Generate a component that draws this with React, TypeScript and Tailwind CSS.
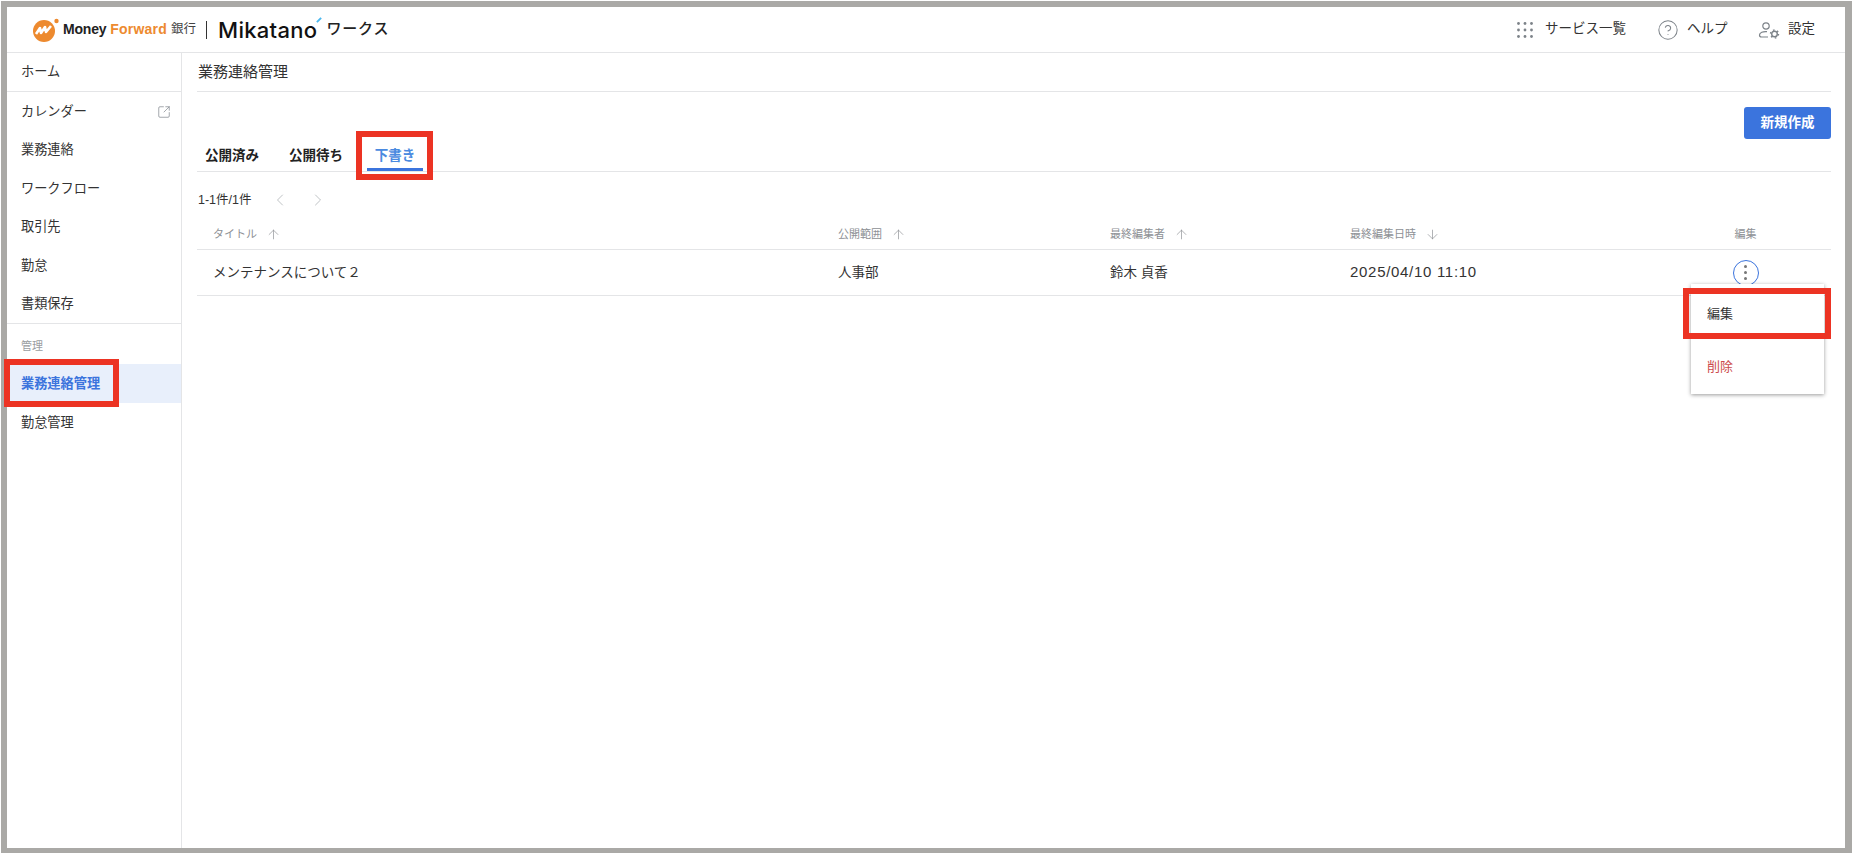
import { ChevronLeft, ChevronRight, ArrowUp, ArrowDown, SquareArrowOutUpRight, CircleHelp } from "lucide-react";

const navTop = ["カレンダー", "業務連絡", "ワークフロー", "取引先", "勤怠", "書類保存"];

const columns = [
  { label: "タイトル", value: "メンテナンスについて２", up: true, latin: false },
  { label: "公開範囲", value: "人事部", up: true, latin: false },
  { label: "最終編集者", value: "鈴木 貞香", up: true, latin: false },
  { label: "最終編集日時", value: "2025/04/10 11:10", up: false, latin: true },
];

function Logo() {
  return (
    <div className="flex items-center">
      <svg width="27" height="24" viewBox="0 0 27 24" className="ml-[25px]">
        <circle cx="12" cy="13" r="11" fill="#ed8a2f" />
        <path d="M4 16 L8 10 L9 15 L13 9 L14 14 L19 8" fill="none" stroke="#fff" strokeWidth="2.6" strokeLinejoin="round" />
        <circle cx="24.5" cy="3" r="2.2" fill="#ed8a2f" />
      </svg>
      <span className="ml-[4px] text-[14px] font-bold tracking-[-0.2px] text-[#222]">Money</span>
      <span className="ml-[4px] text-[14px] font-bold tracking-[0.2px] text-[#ed8a2f]">Forward</span>
      <span className="ml-[4px] text-[12.5px] text-[#444]">銀行</span>
      <span className="ml-[10px] h-[18px] w-px bg-[#333]" />
      <span className="relative ml-[11px] font-['Inter',sans-serif] text-[22px] font-medium leading-none tracking-[0.3px] text-[#111]">
        Mikatano
        <span className="absolute right-[-5px] top-[0px] h-[2px] w-[6px] -rotate-45 bg-[#4db8ee]" />
      </span>
      <span className="ml-[9px] text-[15px] font-medium tracking-[0.8px] text-[#222]">ワークス</span>
    </div>
  );
}

function HeaderRight() {
  return (
    <div className="flex items-center whitespace-nowrap text-[13.5px] text-[#333]">
      <svg width="16" height="16" viewBox="0 0 16 16" fill="#7d8389">
        {[1.5, 8, 14.5].map((y) =>
          [1.5, 8, 14.5].map((x) => <circle key={`${x}-${y}`} cx={x} cy={y} r="1.4" />),
        )}
      </svg>
      <span className="ml-[12px] w-[81px]">サービス一覧</span>
      <CircleHelp size={22} strokeWidth={1.1} className="ml-[31px] text-[#7d8389]" />
      <span className="ml-[8px] w-[41px]">ヘルプ</span>
      <svg width="22" height="18" viewBox="0 0 22 18" fill="none" stroke="#7d8389" strokeWidth="1.2" className="ml-[30px]">
        <circle cx="8" cy="5" r="3.2" />
        <path d="M9 10.6 C5 10.2 1.5 11.6 1.5 14 C1.5 15.2 2.2 16 3.5 16 H10" />
        <circle cx="16.5" cy="13" r="2.8" strokeWidth="1.4" />
        <circle cx="16.5" cy="13" r="4" strokeWidth="1.4" strokeDasharray="1.6 2.6" />
      </svg>
      <span className="ml-[8px] mr-[30px]">設定</span>
    </div>
  );
}

function Sidebar() {
  return (
    <aside className="w-[175px] shrink-0 border-r border-[#e4e5e7] text-[13.2px] text-[#333]">
      <div className="flex h-[39px] items-center border-b border-[#e4e5e7] pl-[14px]">ホーム</div>
      <div className="h-[232px] border-b border-[#e4e5e7] pt-[0.5px]">
        {navTop.map((item, i) => (
          <div key={item} className="flex h-[38.5px] items-center justify-between pl-[14px] pr-[10px]">
            {item}
            {i === 0 && <SquareArrowOutUpRight size={14} strokeWidth={1.2} className="text-[#7d8389]" />}
          </div>
        ))}
      </div>
      <div className="flex h-[40px] items-center pl-[14px] pt-[4px] text-[11px] text-[#9a9da1]">管理</div>
      <div className="flex h-[39px] items-center bg-[#e8effb] pl-[14px] font-bold text-[#3b74dd]">業務連絡管理</div>
      <div className="flex h-[39px] items-center pl-[14px]">勤怠管理</div>
    </aside>
  );
}

function RowsTable() {
  return (
    <div className="mt-[5px]">
      <div className="grid h-[33px] grid-cols-[625px_272px_240px_327px_169px] items-center border-b border-[#e4e5e7] pt-[2px] text-[11px] text-[#8d9095]">
        {columns.map((c) => (
          <div key={c.label} className="flex items-center gap-[9px] pl-[16px]">
            {c.label}
            {c.up ? <ArrowUp size={15} strokeWidth={1.1} /> : <ArrowDown size={15} strokeWidth={1.1} />}
          </div>
        ))}
        <div className="text-center">編集</div>
      </div>
      <div className="grid h-[46px] grid-cols-[625px_272px_240px_327px_169px] items-center border-b border-[#e4e5e7] text-[13.5px] text-[#333]">
        {columns.map((c) => (
          <div key={c.label} className={c.latin ? "pl-[16px] text-[15px] tracking-[0.7px]" : "pl-[16px] pt-[2px]"}>
            {c.value}
          </div>
        ))}
        <div className="flex justify-center">
          <span className="flex h-[26px] w-[26px] flex-col items-center justify-center gap-[3.5px] rounded-full border-[1.5px] border-[#3b74dd]">
            <span className="h-[2.5px] w-[2.5px] rounded-full bg-[#777]" />
            <span className="h-[2.5px] w-[2.5px] rounded-full bg-[#777]" />
            <span className="h-[2.5px] w-[2.5px] rounded-full bg-[#777]" />
          </span>
        </div>
      </div>
    </div>
  );
}

export default function App() {
  return (
    <div className="relative h-[856px] w-[1852px] overflow-hidden bg-white font-['Liberation_Sans','Noto_Sans_CJK_JP',sans-serif]">
      <div className="ml-px mt-px flex h-[852px] w-[1851px] flex-col border-b-[5px] border-l-[6px] border-r-[7px] border-t-[6px] border-[#aaa9a6] bg-white">
        {/* Header */}
        <header className="flex h-[46px] shrink-0 items-center justify-between border-b border-[#e4e5e7]">
          <Logo />
          <HeaderRight />
        </header>

        <div className="flex min-h-0 flex-1">
          <Sidebar />

          <main className="flex-1 pl-[15px] pr-[14px]">
            <h1 className="flex h-[39px] items-center border-b border-[#e4e5e7] pl-px text-[15px] text-[#333]">業務連絡管理</h1>

            <div className="mt-[15px] flex justify-end">
              <button className="flex h-[32px] w-[87px] items-center justify-center rounded-[3px] bg-[#3b74dd] text-[13.5px] font-bold text-white">
                新規作成
              </button>
            </div>

            {/* Tabs */}
            <div className="mt-[2px] flex h-[31px] items-start border-b border-[#e4e5e7] text-[13.5px] font-bold text-[#222]">
              <div className="ml-[8px] flex h-[30px] items-center">公開済み</div>
              <div className="ml-[30px] flex h-[30px] items-center">公開待ち</div>
              <div className="relative ml-[24px] flex h-[30px] w-[56px] items-center justify-center text-[#4a8ae0]">
                下書き
                <span className="absolute bottom-0 left-0 h-[3px] w-full bg-[#3b74dd]" />
              </div>
            </div>

            {/* Pagination */}
            <div className="mt-[16px] flex h-[24px] items-center text-[12.5px] text-[#333]">
              <span className="pl-px">1-1件/1件</span>
              <ChevronLeft size={20} strokeWidth={1.1} className="ml-[18px] text-[#b9bcc0]" />
              <ChevronRight size={20} strokeWidth={1.1} className="ml-[18px] text-[#b9bcc0]" />
            </div>

            <RowsTable />
          </main>
        </div>
      </div>

      {/* Row menu */}
      <div className="absolute left-[1691px] top-[284px] h-[110px] w-[133px] bg-white text-[13px] shadow-[0_1px_4px_rgba(0,0,0,0.4)]">
        <div className="flex h-[58px] items-center pl-[16px] pt-[2px] text-[#333]">編集</div>
        <div className="flex h-[50px] items-center pl-[16px] text-[#cc4b4b]">削除</div>
      </div>

      {/* Red annotation boxes */}
      <div className="absolute left-[356px] top-[131px] h-[49px] w-[77px] border-[6px] border-[#ec3323]" />
      <div className="absolute left-[4px] top-[359px] h-[48px] w-[115px] border-[6px] border-[#ec3323]" />
      <div className="absolute left-[1683px] top-[288px] h-[51px] w-[148px] border-[6px] border-[#ec3323]" />
    </div>
  );
}
